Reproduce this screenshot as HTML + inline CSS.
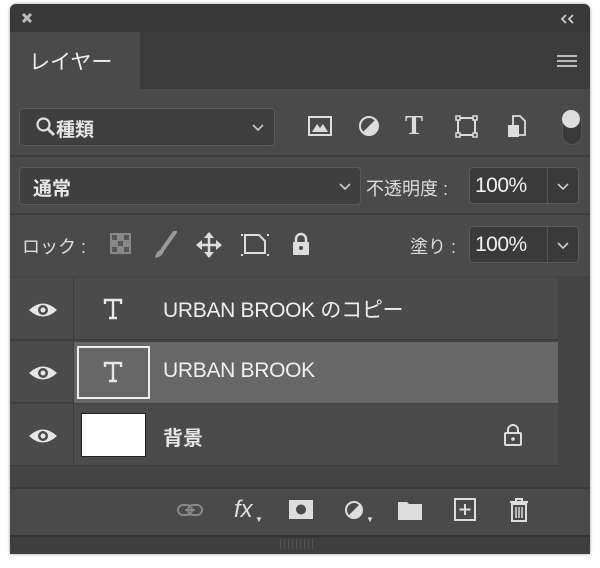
<!DOCTYPE html>
<html><head><meta charset="utf-8">
<style>
*{margin:0;padding:0;box-sizing:border-box}
body{width:600px;height:568px;background:#fff;position:relative;overflow:hidden;font-family:"Liberation Sans","Noto Sans CJK JP",sans-serif;color:#e6e6e6}
.a{position:absolute}
.box{position:absolute;background:#3f3f3f;border:1px solid #5a5a5a;border-radius:4px}
.t{position:absolute;white-space:nowrap}
</style></head><body>
<div class="a" style="left:10px;top:4px;width:580px;height:550px;background:#4a4a4a;border-radius:6px 6px 0 0;box-shadow:0 0 3px rgba(0,0,0,.4)"></div>
<div class="a" style="left:10px;top:4px;width:580px;height:28px;background:#393939;border-radius:6px 6px 0 0"></div>
<svg class="a" style="left:21px;top:12px" width="12" height="12"><path d="M2 2 L10 10 M10 2 L2 10" stroke="#bbb" stroke-width="3"/></svg>
<svg class="a" style="left:560px;top:14px" width="16" height="10"><path d="M6 1 L2 5 L6 9 M13 1 L9 5 L13 9" fill="none" stroke="#ccc" stroke-width="1.8"/></svg>
<div class="a" style="left:10px;top:32px;width:580px;height:57px;background:#3c3c3c"></div>
<div class="a" style="left:10px;top:32px;width:130px;height:57px;background:#4a4a4a"></div>
<div class="t" style="left:29px;top:46px;font-size:21px;color:#eee">レイヤー</div>
<div class="a" style="left:557px;top:55px;width:20px;height:12px;border-top:2px solid #bbb;border-bottom:2px solid #bbb"></div>
<div class="a" style="left:557px;top:60px;width:20px;height:2px;background:#bbb"></div>
<div class="box" style="left:19px;top:108px;width:256px;height:38px"></div>
<svg class="a" style="left:35px;top:116px" width="22" height="22"><circle cx="8.5" cy="8.5" r="6" fill="none" stroke="#ddd" stroke-width="2.2"/><path d="M13 13 L19 19" stroke="#ddd" stroke-width="3"/></svg>
<div class="t" style="left:56px;top:115px;font-size:19px;font-weight:bold">種類</div>
<svg class="a" style="left:252px;top:124px" width="12" height="8"><path d="M1 1 L6 6 L11 1" fill="none" stroke="#ccc" stroke-width="1.6"/></svg>
<svg class="a" style="left:308px;top:115px" width="25" height="22"><rect x="1" y="2" width="22" height="18" fill="none" stroke="#ddd" stroke-width="2"/><path d="M4 17 L9 9 L12 13 L15 9 L20 17Z" fill="#ddd"/></svg>
<svg class="a" style="left:358px;top:115px" width="22" height="22"><circle cx="11" cy="11" r="9" fill="none" stroke="#ddd" stroke-width="2"/><path d="M17.4 4.6 A9 9 0 0 1 4.6 17.4Z" fill="#ddd"/></svg>
<div class="t" style="left:405px;top:110px;font-size:27px;font-family:'Liberation Serif',serif;font-weight:bold;color:#ddd">T</div>
<svg class="a" style="left:455px;top:115px" width="24" height="24"><rect x="3" y="3" width="17" height="17" fill="none" stroke="#ddd" stroke-width="2"/><g fill="#4a4a4a" stroke="#ddd" stroke-width="1.5"><rect x="1" y="1" width="4" height="4"/><rect x="18" y="1" width="4" height="4"/><rect x="1" y="18" width="4" height="4"/><rect x="18" y="18" width="4" height="4"/></g></svg>
<svg class="a" style="left:506px;top:114px" width="22" height="26"><path d="M7 2 H14 L19 7 V21 H7Z" fill="none" stroke="#ddd" stroke-width="1.8"/><rect x="2" y="11" width="11" height="12" fill="#ddd"/></svg>
<div class="a" style="left:562px;top:110px;width:20px;height:35px;border-radius:10px;background:#3a3a3a;border:1px solid #555"></div>
<div class="a" style="left:562px;top:110px;width:18px;height:18px;border-radius:50%;background:#ddd"></div>
<div class="a" style="left:10px;top:155px;width:580px;height:2px;background:#3d3d3d"></div>
<div class="box" style="left:19px;top:167px;width:342px;height:38px"></div>
<div class="t" style="left:33px;top:174px;font-size:19px;font-weight:bold">通常</div>
<svg class="a" style="left:339px;top:183px" width="12" height="8"><path d="M1 1 L6 6 L11 1" fill="none" stroke="#ccc" stroke-width="1.6"/></svg>
<div class="t" style="left:366px;top:175px;font-size:18px;color:#ddd">不透明度 :</div>
<div class="box" style="left:469px;top:167px;width:110px;height:37px;background:#3a3a3a"></div>
<div class="a" style="left:547px;top:168px;width:1px;height:35px;background:#555"></div>
<div class="t" style="left:475px;top:174px;font-size:21px;color:#f0f0f0;letter-spacing:-0.5px">100%</div>
<svg class="a" style="left:557px;top:183px" width="12" height="8"><path d="M1 1 L6 6 L11 1" fill="none" stroke="#ccc" stroke-width="1.6"/></svg>
<div class="a" style="left:10px;top:213px;width:580px;height:2px;background:#3d3d3d"></div>
<div class="t" style="left:22px;top:233px;font-size:18px;color:#ddd">ロック :</div>
<svg class="a" style="left:110px;top:233px" width="22" height="22"><rect width="21" height="21" fill="#888"/><g fill="#555"><rect x="2" y="2" width="5" height="5"/><rect x="14" y="2" width="5" height="5"/><rect x="8" y="8" width="5" height="5"/><rect x="2" y="14" width="5" height="5"/><rect x="14" y="14" width="5" height="5"/></g></svg>
<svg class="a" style="left:153px;top:231px" width="24" height="28"><path d="M22 1 L10 18" stroke="#999" stroke-width="4" stroke-linecap="round"/><path d="M9 18 Q3 20 2 27 Q9 26 11 20Z" fill="#999"/></svg>
<svg class="a" style="left:195px;top:231px" width="28" height="28"><path d="M14 2 V26 M2 14 H26" stroke="#ddd" stroke-width="2.5"/><path d="M14 1 L9 7 H19Z M14 27 L9 21 H19Z M1 14 L7 9 V19Z M27 14 L21 9 V19Z" fill="#ddd"/></svg>
<svg class="a" style="left:240px;top:231px" width="30" height="26"><path d="M5 4 H19 L25 10 V22 H5Z" fill="none" stroke="#ddd" stroke-width="2"/><g fill="#ddd"><rect x="1" y="3" width="2" height="2"/><rect x="27" y="3" width="2" height="2"/><rect x="1" y="23" width="2" height="2"/><rect x="27" y="23" width="2" height="2"/></g></svg>
<svg class="a" style="left:290px;top:231px" width="22" height="26"><path d="M6 12 V8 A5 5 0 0 1 16 8 V12" fill="none" stroke="#ddd" stroke-width="2.5"/><rect x="3" y="11" width="16" height="13" rx="1" fill="#ddd"/><circle cx="11" cy="17" r="2" fill="#4a4a4a"/></svg>
<div class="t" style="left:410px;top:233px;font-size:18px;color:#ddd">塗り :</div>
<div class="box" style="left:469px;top:226px;width:110px;height:37px;background:#3a3a3a"></div>
<div class="a" style="left:547px;top:227px;width:1px;height:35px;background:#555"></div>
<div class="t" style="left:475px;top:233px;font-size:21px;color:#f0f0f0;letter-spacing:-0.5px">100%</div>
<svg class="a" style="left:557px;top:242px" width="12" height="8"><path d="M1 1 L6 6 L11 1" fill="none" stroke="#ccc" stroke-width="1.6"/></svg>
<div class="a" style="left:10px;top:276px;width:580px;height:211px;background:#444"></div>
<div class="a" style="left:10px;top:278px;width:548px;height:62px;background:#4b4b4b;border-bottom:1px solid #3c3c3c"></div>
<div class="a" style="left:73px;top:342px;width:485px;height:61px;background:#676767"></div>
<div class="a" style="left:10px;top:342px;width:63px;height:61px;background:#4b4b4b;border-bottom:1px solid #3c3c3c"></div>
<div class="a" style="left:10px;top:404px;width:548px;height:62px;background:#4b4b4b;border-bottom:1px solid #3c3c3c"></div>
<div class="a" style="left:73px;top:278px;width:1px;height:188px;background:#3c3c3c"></div>
<svg class="a" style="left:28px;top:301px" width="30" height="18"><path d="M1 9 Q15 -4 29 9 Q15 22 1 9Z" fill="#e6e6e6"/><circle cx="15" cy="9" r="5" fill="#4b4b4b"/><circle cx="15" cy="9" r="2.5" fill="#e6e6e6"/></svg>
<svg class="a" style="left:28px;top:364px" width="30" height="18"><path d="M1 9 Q15 -4 29 9 Q15 22 1 9Z" fill="#e6e6e6"/><circle cx="15" cy="9" r="5" fill="#4b4b4b"/><circle cx="15" cy="9" r="2.5" fill="#e6e6e6"/></svg>
<svg class="a" style="left:28px;top:427px" width="30" height="18"><path d="M1 9 Q15 -4 29 9 Q15 22 1 9Z" fill="#e6e6e6"/><circle cx="15" cy="9" r="5" fill="#4b4b4b"/><circle cx="15" cy="9" r="2.5" fill="#e6e6e6"/></svg>
<svg class="a" style="left:103px;top:298px" width="20" height="22"><path d="M2 6 V2 H18 V6 M10 2 V20 M6 20 H14" fill="none" stroke="#e6e6e6" stroke-width="2.4"/></svg>
<div class="t" style="left:163px;top:294px;font-size:21px;color:#eee;letter-spacing:-0.3px">URBAN BROOK のコピー</div>
<div class="a" style="left:77px;top:346px;width:73px;height:53px;border:2px solid #eee"></div>
<svg class="a" style="left:103px;top:361px" width="20" height="22"><path d="M2 6 V2 H18 V6 M10 2 V20 M6 20 H14" fill="none" stroke="#e6e6e6" stroke-width="2.4"/></svg>
<div class="t" style="left:163px;top:359px;font-size:21px;color:#f0f0f0;letter-spacing:-0.3px">URBAN BROOK</div>
<div class="a" style="left:81px;top:413px;width:65px;height:44px;background:#fff;border:1px solid #222"></div>
<div class="t" style="left:163px;top:422px;font-size:20px;font-weight:bold;color:#e6e6e6">背景</div>
<svg class="a" style="left:502px;top:422px" width="22" height="26"><path d="M6 11 V8 A5 5 0 0 1 16 8 V11" fill="none" stroke="#ddd" stroke-width="2"/><rect x="3" y="11" width="16" height="12" rx="1" fill="none" stroke="#ddd" stroke-width="2"/><circle cx="11" cy="17" r="1.8" fill="#ddd"/></svg>
<div class="a" style="left:10px;top:487px;width:580px;height:2px;background:#3a3a3a"></div>
<svg class="a" style="left:176px;top:502px" width="30" height="16"><rect x="2" y="3" width="14" height="10" rx="5" fill="none" stroke="#888" stroke-width="2"/><rect x="12" y="3" width="14" height="10" rx="5" fill="none" stroke="#888" stroke-width="2"/><path d="M9 8 H19" stroke="#888" stroke-width="2"/></svg>
<div class="t" style="left:234px;top:496px;font-size:24px;font-style:italic;font-family:'Liberation Sans',sans-serif;color:#ddd">fx</div>
<div class="t" style="left:255px;top:515px;font-size:8px;color:#ddd">▼</div>
<svg class="a" style="left:288px;top:499px" width="26" height="22"><rect x="1" y="1" width="24" height="19" fill="#ddd"/><circle cx="13" cy="10.5" r="5" fill="#4a4a4a"/></svg>
<svg class="a" style="left:344px;top:500px" width="22" height="22"><circle cx="10" cy="10" r="8" fill="none" stroke="#ddd" stroke-width="2"/><path d="M15.7 4.3 A8 8 0 0 1 4.3 15.7Z" fill="#ddd"/></svg>
<div class="t" style="left:366px;top:515px;font-size:8px;color:#ddd">▼</div>
<svg class="a" style="left:397px;top:499px" width="26" height="22"><path d="M1 3 H10 L12 5 H25 V21 H1Z" fill="#ddd"/></svg>
<svg class="a" style="left:454px;top:498px" width="22" height="24"><rect x="1" y="1" width="20" height="21" fill="none" stroke="#ddd" stroke-width="2"/><path d="M11 6 V17 M5.5 11.5 H16.5" stroke="#ddd" stroke-width="2"/></svg>
<svg class="a" style="left:508px;top:497px" width="22" height="26"><path d="M2 5 H20 M8 5 V2 H14 V5" fill="none" stroke="#ddd" stroke-width="2"/><path d="M4 7 H18 V24 H4Z" fill="none" stroke="#ddd" stroke-width="2"/><path d="M8 10 V21 M11 10 V21 M14 10 V21" stroke="#ddd" stroke-width="1.5"/></svg>
<div class="a" style="left:10px;top:535px;width:580px;height:19px;background:#3f3f3f;border-top:2px solid #333"></div>
<div class="a" style="left:280px;top:539px;width:36px;height:10px;background:repeating-linear-gradient(90deg,#555 0 1px,transparent 1px 4px)"></div>
</body></html>
